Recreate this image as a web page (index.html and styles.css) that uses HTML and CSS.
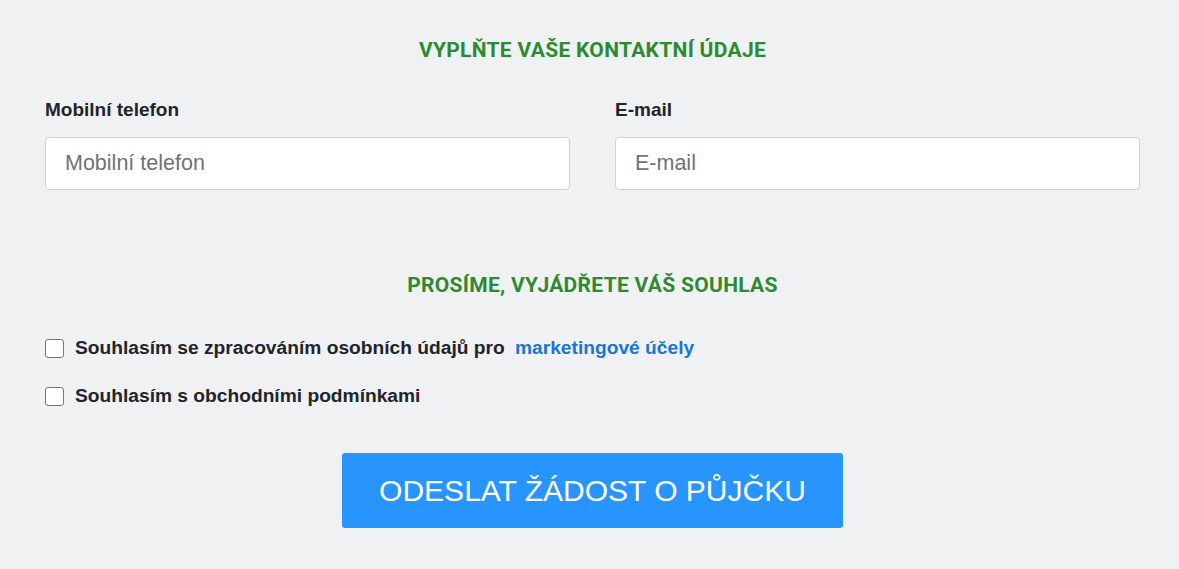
FILE: index.html
```html
<!DOCTYPE html>
<html lang="cs">
<head>
<meta charset="utf-8">
<title>Formulář</title>
<link rel="stylesheet" href="styles.css">
</head>
<body>
<main class="form">
  <h2 class="section-title">VYPLŇTE VAŠE KONTAKTNÍ ÚDAJE</h2>
  <div class="fields">
    <div class="field">
      <label class="field-label" for="phone">Mobilní telefon</label>
      <input class="field-input" id="phone" type="text" placeholder="Mobilní telefon">
    </div>
    <div class="field">
      <label class="field-label" for="email">E-mail</label>
      <input class="field-input" id="email" type="text" placeholder="E-mail">
    </div>
  </div>
  <h2 class="section-title consent-title">PROSÍME, VYJÁDŘETE VÁŠ SOUHLAS</h2>
  <div class="checks">
    <label class="check"><input type="checkbox" class="check-box"><span>Souhlasím se zpracováním osobních údajů pro <a class="check-link" href="#">marketingové účely</a></span></label>
    <label class="check"><input type="checkbox" class="check-box"><span>Souhlasím s obchodními podmínkami</span></label>
  </div>
  <div class="actions">
    <button class="submit" type="button">ODESLAT ŽÁDOST O PŮJČKU</button>
  </div>
</main>
</body>
</html>
```

FILE: styles.css
```css
html, body {
  margin: 0;
  padding: 0;
  background: #f0f1f3;
}
body {
  font-family: "Liberation Sans", Arial, sans-serif;
  color: #212529;
}
.form {
  padding: 37px 39px 0 45px;
}
.section-title {
  margin: 0;
  text-align: center;
  font-family: Roboto, "Noto Sans", sans-serif;
  font-weight: 700;
  font-size: 21px;
  line-height: 26px;
  letter-spacing: 0.3px;
  color: #2d8a2f;
}
.fields {
  display: grid;
  grid-template-columns: 1fr 1fr;
  column-gap: 45px;
  margin-top: 36px;
}
.field {
  display: flex;
  flex-direction: column;
}
.field-label {
  font-weight: 700;
  font-size: 19px;
  line-height: 22px;
  color: #212529;
  margin-bottom: 16px;
}
.field-input {
  box-sizing: border-box;
  height: 53px;
  border: 1px solid #cfd2d6;
  border-radius: 4px;
  background: #fff;
  padding: 0 19px;
  font-family: "Liberation Sans", Arial, sans-serif;
  font-size: 21.5px;
  color: #333;
  outline: none;
}
.field-input::placeholder {
  color: #6c737a;
}
.consent-title {
  margin-top: 82px;
}
.checks {
  margin-top: 39px;
  display: flex;
  flex-direction: column;
  gap: 26px;
}
.check {
  display: flex;
  align-items: center;
  font-weight: 700;
  font-size: 19.2px;
  line-height: 22px;
  color: #212529;
}
.check-box {
  appearance: none;
  -webkit-appearance: none;
  box-sizing: border-box;
  width: 19px;
  height: 19px;
  margin: 0 11px 0 0;
  border: 1px solid #767676;
  border-radius: 3px;
  background: #fff;
  flex: none;
}
.check-link {
  color: #1a75d6;
  text-decoration: none;
  margin-left: 5px;
}
.actions {
  display: flex;
  justify-content: center;
  margin-top: 46px;
}
.submit {
  width: 501px;
  height: 75px;
  border: none;
  border-radius: 3px;
  background: #2894fe;
  color: #fff;
  font-family: "Liberation Sans", Arial, sans-serif;
  font-size: 30px;
  cursor: pointer;
}
```
